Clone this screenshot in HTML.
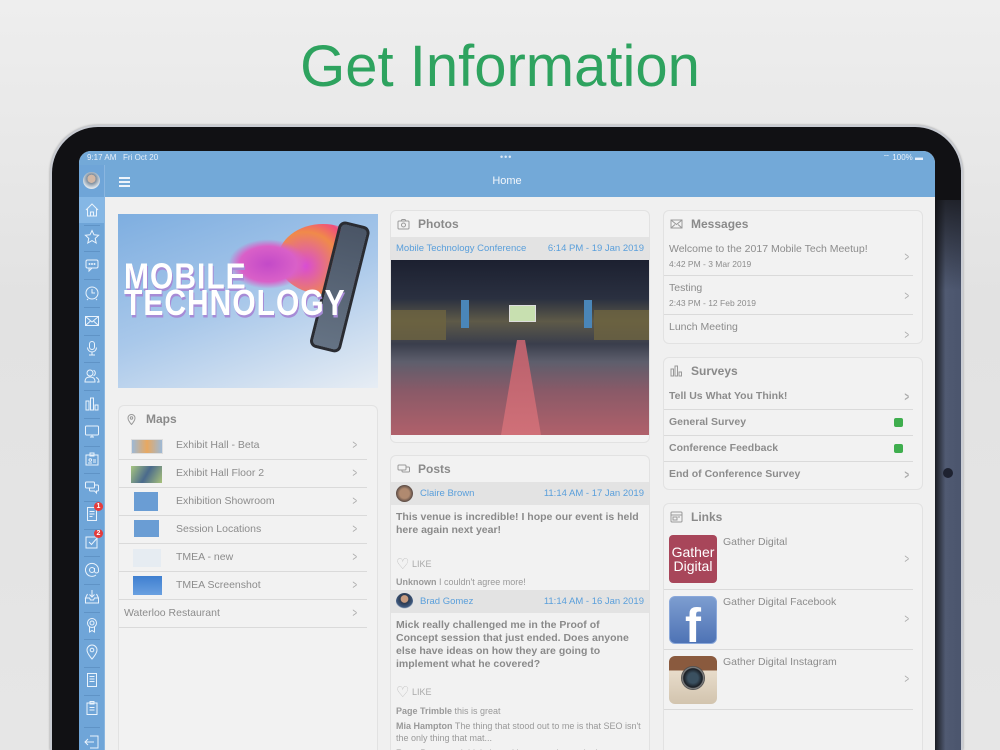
<!DOCTYPE html>
<html><head><meta charset="utf-8"><style>
*{margin:0;padding:0;box-sizing:border-box}
html{width:1000px;height:750px;overflow:hidden}
body{width:1000px;height:750px;overflow:hidden;position:relative;font-family:"Liberation Sans",Arial,sans-serif;background:linear-gradient(#eeeeee,#e2e2e2 40%,#e6e6e6);}
.title{position:absolute;left:0;right:0;top:33px;text-align:center;font-size:58px;color:#2ea35f;letter-spacing:0px}
.ipad{position:absolute;left:50px;top:125px;width:913px;height:625px;border-radius:48px 48px 0 0;background:#111114;border:2px solid #c9ccd3;border-bottom:none;box-shadow:0 0 2px #999}
.rside{position:absolute;left:935px;top:200px;width:26px;height:550px;background:linear-gradient(90deg,#1a1c22,#505a72 40%,#4b556d);}
.rside2{position:absolute;left:935px;top:170px;width:26px;height:120px;background:linear-gradient(#111114,rgba(17,17,20,0));}
.cam{position:absolute;left:943px;top:468px;width:10px;height:10px;border-radius:50%;background:#1e2230}
.screen{position:absolute;left:79px;top:151px;width:856px;height:599px;border-radius:12px 12px 0 0;overflow:hidden;background:#f0f0f0}
.status{position:absolute;left:0;top:0;width:856px;height:46px;background:#73a9d8}
.status .t{position:absolute;left:8px;top:2px;font-size:8px;color:#e8f0fa}
.status .r{position:absolute;right:12px;top:2px;font-size:8px;color:#e8f0fa}
.status .d{position:absolute;left:421px;top:1px;font-size:9px;color:#dbe8f6;letter-spacing:1px}
.home{position:absolute;left:0;right:0;top:24px;text-align:center;font-size:11px;color:#f2f6fb}
.burg{position:absolute;left:40px;top:26px;width:11px}
.burg i{display:block;height:1.5px;background:#eef4fb;margin-bottom:2.5px}
.side{position:absolute;left:0;top:14px;width:26px;height:585px;background:#6fa5d8;border-right:1px solid #8ab6e0;overflow:hidden}
.side .av{position:absolute;left:4px;top:7px;width:17px;height:17px;border-radius:50%;background:radial-gradient(circle at 50% 40%,#d2b8a6 30%,#7c8d9e 32%,#dfe6ec 70%)}
.side .hl{position:absolute;left:0;top:32px;width:26px;height:26px;background:#85b7e5}
.side svg{position:absolute;left:5px;width:16px;height:16px}
.side .sep{position:absolute;left:5px;width:16px;height:1px;background:#5f93c6}
.badge{position:absolute;left:15px;width:9px;height:9px;border-radius:50%;background:#e53b3b;color:#fff;font-size:7px;font-weight:bold;text-align:center;line-height:9px}
.card{position:absolute;background:#f2f2f2;border:1px solid #e2e2e2;border-radius:6px;overflow:hidden}
.ch{height:26px;padding:6px 0 0 27px;font-size:12px;font-weight:bold;color:#8a8a8a;position:relative}
.ch svg{position:absolute;left:6px;top:7px;width:13px;height:12px}
.row{position:relative;border-bottom:1px solid #dadada;color:#8c8c8c;font-size:10.5px}
.chev{position:absolute;right:8px;color:#aaa;font-size:13px;transform:scaleX(.6)}
.blue{color:#5a9fdb}
.gbar{background:#e3e3e3;height:23px;position:relative;font-size:9.5px}
.chk{position:absolute;right:10px;top:8px;width:9px;height:9px;border-radius:2px;background:#3fae4e}
</style></head><body>
<div class="title">Get Information</div>
<div class="ipad"></div>
<div class="rside"></div>
<div class="rside2"></div>
<div class="cam"></div>
<div class="screen">
 <div class="status"><span class="t">9:17 AM&nbsp;&nbsp;&nbsp;Fri Oct 20</span><span class="d">•••</span><span class="r">⌔ 100% ▬</span>
  <div class="burg"><i></i><i></i><i></i></div><div class="home">Home</div></div>
 <div class="side">
  <div class="av"></div><div class="hl"></div>
  <svg style="top:37px" viewBox="0 0 16 16" fill="none" stroke="#eaf3fc" stroke-width="1"><path d="M2 8L8 2l6 6M3.5 7v7h9V7M6.5 14v-4h3v4"/></svg>
  <svg style="top:64px" viewBox="0 0 16 16" fill="none" stroke="#eaf3fc" stroke-width="1"><path d="M8 1.5l2 4.3 4.6.5-3.4 3.1 1 4.6L8 11.6 3.8 14l1-4.6L1.4 6.3 6 5.8z"/></svg>
  <svg style="top:92px" viewBox="0 0 16 16" fill="none" stroke="#eaf3fc" stroke-width="1"><rect x="2" y="3" width="12" height="8" rx="1.5"/><path d="M5 11v3l3-3"/><circle cx="5.5" cy="7" r=".5"/><circle cx="8" cy="7" r=".5"/><circle cx="10.5" cy="7" r=".5"/></svg>
  <svg style="top:120px" viewBox="0 0 16 16" fill="none" stroke="#eaf3fc" stroke-width="1"><circle cx="8" cy="8" r="6"/><path d="M8 4v4h3M4 14l-1 1M12 14l1 1"/></svg>
  <svg style="top:148px" viewBox="0 0 16 16" fill="none" stroke="#eaf3fc" stroke-width="1"><rect x="1.5" y="3.5" width="13" height="9"/><path d="M1.5 3.5L8 9l6.5-5.5M1.5 12.5l5-4.5M14.5 12.5l-5-4.5"/></svg>
  <svg style="top:175px" viewBox="0 0 16 16" fill="none" stroke="#eaf3fc" stroke-width="1"><rect x="5.5" y="1.5" width="5" height="8" rx="2.5"/><path d="M3.5 7.5a4.5 4.5 0 009 0M8 12v3M5 15h6"/></svg>
  <svg style="top:203px" viewBox="0 0 16 16" fill="none" stroke="#eaf3fc" stroke-width="1"><circle cx="6" cy="5" r="3"/><path d="M1 14c0-4 2-5 5-5s5 1 5 5zM9.5 2.3a3 3 0 010 5.5M12 9.5c2 .5 3 2 3 4.5h-2"/></svg>
  <svg style="top:231px" viewBox="0 0 16 16" fill="none" stroke="#eaf3fc" stroke-width="1"><path d="M2 14V5h3v9zM6.5 14V2h3v12zM11 14V9h3v5z"/></svg>
  <svg style="top:258px" viewBox="0 0 16 16" fill="none" stroke="#eaf3fc" stroke-width="1"><rect x="1.5" y="3" width="13" height="9" rx="1"/><path d="M6 14h4M8 12v2"/></svg>
  <svg style="top:286px" viewBox="0 0 16 16" fill="none" stroke="#eaf3fc" stroke-width="1"><rect x="2" y="4" width="12" height="10"/><path d="M6 2h4v3H6zM4 12h4M5 9a1.3 1.3 0 102.6 0A1.3 1.3 0 005 9M9 9h3M9 11h3"/></svg>
  <svg style="top:314px" viewBox="0 0 16 16" fill="none" stroke="#eaf3fc" stroke-width="1"><rect x="1.5" y="3" width="9" height="6" rx="1"/><path d="M10.5 6h3a1 1 0 011 1v4a1 1 0 01-1 1h-1v2l-2-2H6.5a1 1 0 01-1-1V9"/></svg>
  <svg style="top:341px" viewBox="0 0 16 16" fill="none" stroke="#eaf3fc" stroke-width="1"><path d="M3.5 1.5h7l2 2v11h-9zM5.5 5.5h5M5.5 8h5M5.5 10.5h3"/></svg>
  <div class="badge" style="top:337px">1</div>
  <svg style="top:369px" viewBox="0 0 16 16" fill="none" stroke="#eaf3fc" stroke-width="1"><rect x="2" y="3" width="11" height="11"/><path d="M5 8l2.5 2.5L14 3"/></svg>
  <div class="badge" style="top:364px">2</div>
  <svg style="top:397px" viewBox="0 0 16 16" fill="none" stroke="#eaf3fc" stroke-width="1"><circle cx="8" cy="8" r="2.5"/><path d="M10.5 6v3a2 2 0 004 0V8a6.5 6.5 0 10-2.5 5"/></svg>
  <svg style="top:424px" viewBox="0 0 16 16" fill="none" stroke="#eaf3fc" stroke-width="1"><path d="M1.5 9v5h13V9l-2-4M3.5 5l-2 4h4l1 2h3l1-2h4M8 1v7M5.5 5.5L8 8l2.5-2.5"/></svg>
  <svg style="top:452px" viewBox="0 0 16 16" fill="none" stroke="#eaf3fc" stroke-width="1"><circle cx="8" cy="6" r="4.5"/><circle cx="8" cy="6" r="2"/><path d="M5.5 10v5l2.5-1.5 2.5 1.5v-5"/></svg>
  <svg style="top:479px" viewBox="0 0 16 16" fill="none" stroke="#eaf3fc" stroke-width="1"><path d="M8 15s5-5.5 5-9A5 5 0 003 6c0 3.5 5 9 5 9z"/><circle cx="8" cy="6" r="1.8"/></svg>
  <svg style="top:507px" viewBox="0 0 16 16" fill="none" stroke="#eaf3fc" stroke-width="1"><path d="M3.5 1.5h9v13h-9zM5.5 4.5h5M5.5 7h5M5.5 9.5h5"/></svg>
  <svg style="top:535px" viewBox="0 0 16 16" fill="none" stroke="#eaf3fc" stroke-width="1"><path d="M3 3h10v11.5H3zM6 1.5h4v2.5H6zM5.5 7.5h5M5.5 10h5"/></svg>
  <svg style="top:569px" viewBox="0 0 16 16" fill="none" stroke="#eaf3fc" stroke-width="1"><path d="M6 2h8v12H6M1 8h9M4 5l-3 3 3 3"/></svg>
  <div class="sep" style="top:60px"></div><div class="sep" style="top:86px"></div><div class="sep" style="top:114px"></div><div class="sep" style="top:142px"></div><div class="sep" style="top:170px"></div><div class="sep" style="top:197px"></div><div class="sep" style="top:225px"></div><div class="sep" style="top:253px"></div><div class="sep" style="top:281px"></div><div class="sep" style="top:308px"></div><div class="sep" style="top:336px"></div><div class="sep" style="top:364px"></div><div class="sep" style="top:391px"></div><div class="sep" style="top:419px"></div><div class="sep" style="top:447px"></div><div class="sep" style="top:474px"></div><div class="sep" style="top:502px"></div><div class="sep" style="top:530px"></div><div class="sep" style="top:562px"></div>
 </div>

 <!-- banner -->
 <div style="position:absolute;left:39px;top:63px;width:260px;height:174px;background:linear-gradient(160deg,#7eaee0,#a9c8ea 50%,#e7edf4);overflow:hidden">
  <div style="position:absolute;left:160px;top:10px;width:90px;height:70px;border-radius:50%;background:radial-gradient(circle at 30% 60%,#d84bd6,#f08a4a 45%,#f04e7c 65%,transparent 72%)"></div>
  <div style="position:absolute;left:110px;top:25px;width:80px;height:50px;border-radius:50%;background:radial-gradient(#c34ac8,#d960c8 50%,transparent 70%)"></div>
  <div style="position:absolute;top:6px;width:32px;height:130px;border:3px solid #2a2c32;border-radius:7px;background:linear-gradient(#4a5566,#657384);transform:rotate(14deg);transform-origin:top left;left:222px"></div>
  <div style="position:absolute;left:6px;top:55px;font-size:30px;font-weight:bold;color:#fff;line-height:22px;letter-spacing:1px;text-shadow:1px 2px 0 #a78bd6;transform:scaleY(1.2)">MOBILE<br>TECHNOLOGY</div>
 </div>

 <!-- Maps -->
 <div class="card" style="left:39px;top:254px;width:260px;height:346px;border-bottom:none;border-radius:6px 6px 0 0">
  <div class="ch"><svg viewBox="0 0 13 12" fill="none" stroke="#999" stroke-width="1"><path d="M6.5 11.5s3.5-4 3.5-6.5a3.5 3.5 0 00-7 0c0 2.5 3.5 6.5 3.5 6.5z"/><circle cx="6.5" cy="5" r="1.2"/></svg>Maps</div>
  <div style="margin-right:10px">
   <div class="row" style="height:28px"><div style="position:absolute;left:12px;top:7px;width:32px;height:15px;background:linear-gradient(90deg,#9db9d6,#e8a860,#9db9d6);border:1px solid #ddd"></div><span style="position:absolute;left:57px;top:7px">Exhibit Hall - Beta</span><span class="chev" style="top:5px">&gt;</span></div>
   <div class="row" style="height:28px"><div style="position:absolute;left:12px;top:6px;width:31px;height:17px;background:linear-gradient(120deg,#a8c680,#4a6a8c,#a9c27a)"></div><span style="position:absolute;left:57px;top:7px">Exhibit Hall Floor 2</span><span class="chev" style="top:5px">&gt;</span></div>
   <div class="row" style="height:28px"><div style="position:absolute;left:15px;top:4px;width:24px;height:19px;background:#6a9dd4"></div><span style="position:absolute;left:57px;top:7px">Exhibition Showroom</span><span class="chev" style="top:5px">&gt;</span></div>
   <div class="row" style="height:28px"><div style="position:absolute;left:15px;top:4px;width:25px;height:17px;background:#6a9dd4"></div><span style="position:absolute;left:57px;top:7px">Session Locations</span><span class="chev" style="top:5px">&gt;</span></div>
   <div class="row" style="height:28px"><div style="position:absolute;left:14px;top:5px;width:28px;height:18px;background:#e6ecf2"></div><span style="position:absolute;left:57px;top:7px">TMEA - new</span><span class="chev" style="top:5px">&gt;</span></div>
   <div class="row" style="height:28px"><div style="position:absolute;left:14px;top:4px;width:29px;height:19px;background:linear-gradient(#3f7fd0,#6aa0e0);"></div><span style="position:absolute;left:57px;top:7px">TMEA Screenshot</span><span class="chev" style="top:5px">&gt;</span></div>
   <div class="row" style="height:28px"><span style="position:absolute;left:5px;top:7px">Waterloo Restaurant</span><span class="chev" style="top:5px">&gt;</span></div>
  </div>
 </div>

 <!-- Photos -->
 <div class="card" style="left:311px;top:59px;width:260px;height:233px">
  <div class="ch" style="height:26px"><svg viewBox="0 0 13 12" fill="none" stroke="#999" stroke-width="1"><rect x="1" y="3" width="11" height="8" rx="1"/><circle cx="6.5" cy="7" r="2"/><path d="M4 3l1-1.5h3L9 3"/></svg>Photos</div>
  <div class="gbar blue"><span style="position:absolute;left:5px;top:6px">Mobile Technology Conference</span><span style="position:absolute;right:5px;top:6px">6:14 PM - 19 Jan 2019</span></div>
  <div style="height:175px;position:relative;background:linear-gradient(#1c2030 0%,#2a3040 22%,#5e5a48 35%,#3a3e4c 48%,#5d5e6c 58%,#8a5a68 75%,#b0606a)">
   <div style="position:absolute;left:0;top:50px;width:55px;height:30px;background:#6e6440;opacity:.8"></div>
   <div style="position:absolute;right:0;top:50px;width:55px;height:30px;background:#6e6440;opacity:.8"></div>
   <div style="position:absolute;left:70px;top:40px;width:8px;height:28px;background:#4a86b8"></div>
   <div style="position:absolute;left:193px;top:40px;width:8px;height:28px;background:#4a86b8"></div>
   <div style="position:absolute;left:118px;top:45px;width:27px;height:17px;background:#c8e0b0;border:1px solid #ddd"></div>
   <div style="position:absolute;left:110px;top:80px;width:40px;height:95px;background:linear-gradient(#b8606c,#d07078);clip-path:polygon(40% 0,60% 0,100% 100%,0 100%)"></div>
  </div>
 </div>

 <!-- Posts -->
 <div class="card" style="left:311px;top:304px;width:260px;height:295px;border-bottom:none;border-radius:6px 6px 0 0">
  <div class="ch"><svg viewBox="0 0 13 12" fill="none" stroke="#999" stroke-width="1"><rect x="1" y="2" width="8" height="5" rx="1"/><path d="M9 4h2.5a1 1 0 011 1v3a1 1 0 01-1 1H6a1 1 0 01-1-1V7"/></svg>Posts</div>
  <div class="gbar"><div style="position:absolute;left:5px;top:3px;width:17px;height:17px;border-radius:50%;background:radial-gradient(#b08a70 40%,#5a4a44 70%)"></div><span class="blue" style="position:absolute;left:29px;top:6px">Claire Brown</span><span class="blue" style="position:absolute;right:5px;top:6px">11:14 AM - 17 Jan 2019</span></div>
  <div style="padding:6px 5px 0;font-size:10.5px;font-weight:bold;color:#8a8a8a;line-height:13px;height:50px">This venue is incredible! I hope our event is held here again next year!</div>
  <div style="padding-left:5px;font-size:9px;color:#aaa;height:22px"><span style="font-size:15px;color:#bbb;vertical-align:-2px">♡</span> LIKE</div>
  <div style="padding-left:5px;font-size:9px;color:#999;height:13px"><b>Unknown</b> I couldn't agree more!</div>
  <div class="gbar"><div style="position:absolute;left:5px;top:3px;width:17px;height:17px;border-radius:50%;background:radial-gradient(circle at 50% 35%,#c89c80 25%,#2c3a50 30%,#3f5a80 60%,#e8e8e8 70%)"></div><span class="blue" style="position:absolute;left:29px;top:6px">Brad Gomez</span><span class="blue" style="position:absolute;right:5px;top:6px">11:14 AM - 16 Jan 2019</span></div>
  <div style="padding:6px 5px 0;font-size:10.5px;font-weight:bold;color:#8a8a8a;line-height:13px;height:70px">Mick really challenged me in the Proof of Concept session that just ended. Does anyone else have ideas on how they are going to implement what he covered?</div>
  <div style="padding-left:5px;font-size:9px;color:#aaa;height:22px"><span style="font-size:15px;color:#bbb;vertical-align:-2px">♡</span> LIKE</div>
  <div style="padding-left:5px;font-size:9px;color:#999;line-height:12px"><b>Page Trimble</b> this is great<div style="height:3px"></div><b>Mia Hampton</b> The thing that stood out to me is that SEO isn't the only thing that mat...<div style="height:3px"></div><b>Russ Duyssen</b> I think that taking more time to look at</div>
 </div>

 <!-- Messages -->
 <div class="card" style="left:584px;top:59px;width:260px;height:134px">
  <div class="ch"><svg viewBox="0 0 13 12" fill="none" stroke="#999" stroke-width="1"><rect x="1" y="2" width="11" height="8"/><path d="M1 2l5.5 4.5L12 2M1 10l4-3.5M12 10L8 6.5"/></svg>Messages</div>
  <div style="margin-right:9px">
   <div class="row" style="height:39px"><span style="position:absolute;left:5px;top:6px">Welcome to the 2017 Mobile Tech Meetup!</span><span style="position:absolute;left:5px;top:22px;font-size:8.5px">4:42 PM - 3 Mar 2019</span><span class="chev" style="top:12px;right:2px">&gt;</span></div>
   <div class="row" style="height:39px"><span style="position:absolute;left:5px;top:6px">Testing</span><span style="position:absolute;left:5px;top:22px;font-size:8.5px">2:43 PM - 12 Feb 2019</span><span class="chev" style="top:12px;right:2px">&gt;</span></div>
   <div class="row" style="height:30px;border:none"><span style="position:absolute;left:5px;top:6px">Lunch Meeting</span><span class="chev" style="top:12px;right:2px">&gt;</span></div>
  </div>
 </div>

 <!-- Surveys -->
 <div class="card" style="left:584px;top:206px;width:260px;height:133px">
  <div class="ch"><svg viewBox="0 0 13 12" fill="none" stroke="#999" stroke-width="1"><path d="M1 11V4h2.5v7zM5 11V1h2.5v10zM9 11V7h2.5v4z"/></svg>Surveys</div>
  <div style="margin-right:9px;font-weight:bold">
   <div class="row" style="height:26px;font-weight:bold"><span style="position:absolute;left:5px;top:6px">Tell Us What You Think!</span><span class="chev" style="top:5px;right:2px">&gt;</span></div>
   <div class="row" style="height:26px;font-weight:bold"><span style="position:absolute;left:5px;top:6px">General Survey</span><span class="chk"></span></div>
   <div class="row" style="height:26px;font-weight:bold"><span style="position:absolute;left:5px;top:6px">Conference Feedback</span><span class="chk"></span></div>
   <div class="row" style="height:26px;border:none;font-weight:bold"><span style="position:absolute;left:5px;top:6px">End of Conference Survey</span><span class="chev" style="top:5px;right:2px">&gt;</span></div>
  </div>
 </div>

 <!-- Links -->
 <div class="card" style="left:584px;top:352px;width:260px;height:247px;border-bottom:none;border-radius:6px 6px 0 0">
  <div class="ch"><svg viewBox="0 0 13 12" fill="none" stroke="#999" stroke-width="1"><rect x="1" y="1" width="11" height="10" rx="1"/><path d="M1 4h11M3 6h4v3H3zM8 6h2"/></svg>Links</div>
  <div style="margin-right:9px">
   <div class="row" style="height:60px"><div style="position:absolute;left:5px;top:5px;width:48px;height:48px;border-radius:4px;background:#a8465a;color:#fff;font-size:14px;line-height:14px;padding-top:10px;text-align:center">Gather<br>Digital</div><span style="position:absolute;left:59px;top:6px">Gather Digital</span><span class="chev" style="top:21px;right:2px">&gt;</span></div>
   <div class="row" style="height:60px"><div style="position:absolute;left:5px;top:6px;width:48px;height:48px;border-radius:6px;background:linear-gradient(#7d9dd0,#4e73b5);border:1px solid #8aa8da;overflow:hidden"><span style="position:absolute;left:15px;top:2px;font-size:48px;font-weight:bold;color:#fff;font-family:'Liberation Sans',sans-serif">f</span></div><span style="position:absolute;left:59px;top:6px">Gather Digital Facebook</span><span class="chev" style="top:21px;right:2px">&gt;</span></div>
   <div class="row" style="height:60px"><div style="position:absolute;left:5px;top:6px;width:48px;height:48px;border-radius:6px;background:linear-gradient(#8a5a3e 0,#8a5a3e 30%,#e8dccb 30%,#d2c4ae)"><div style="position:absolute;left:12px;top:10px;width:24px;height:24px;border-radius:50%;background:radial-gradient(#3a5060 30%,#1a1e24 55%,#888 62%,#444 70%)"></div></div><span style="position:absolute;left:59px;top:6px">Gather Digital Instagram</span><span class="chev" style="top:21px;right:2px">&gt;</span></div>
  </div>
 </div>
</div>
</body></html>
